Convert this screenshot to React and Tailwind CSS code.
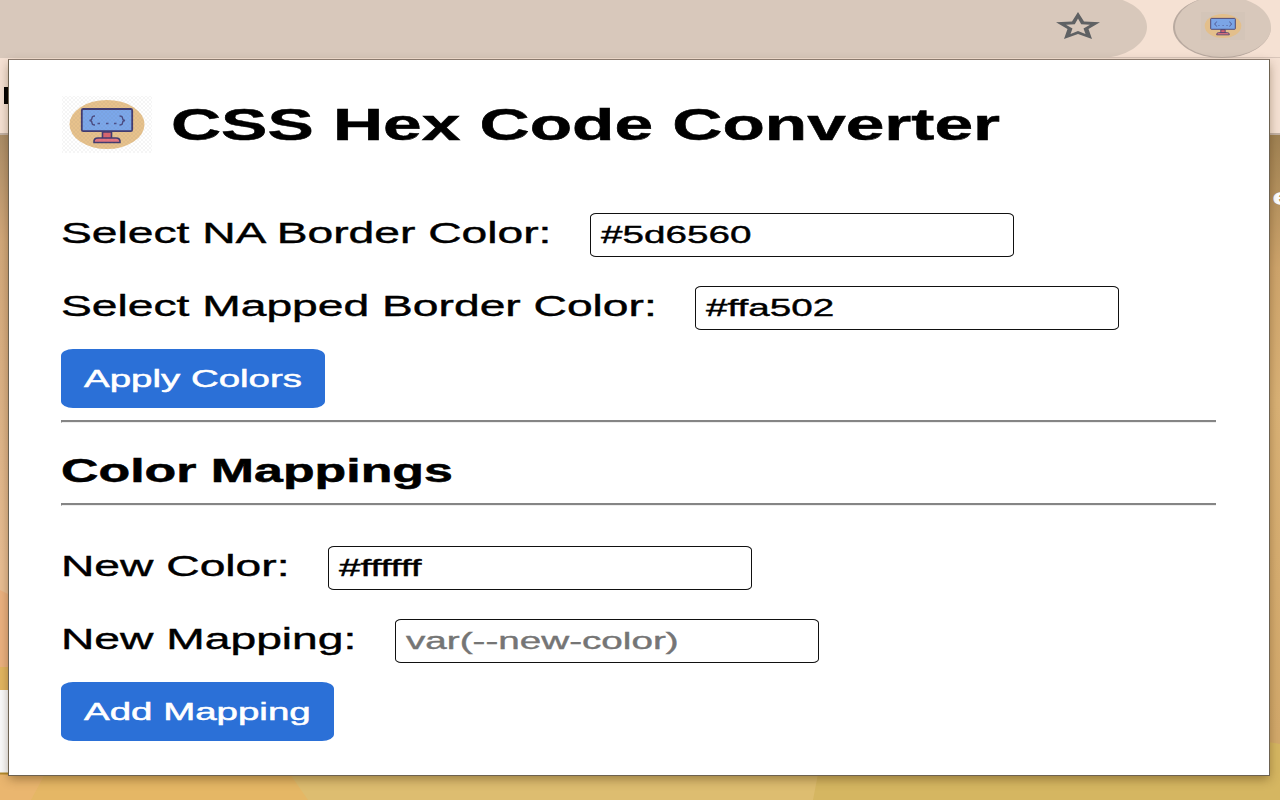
function Txt({ className = "", children }) {
  return (
    <span className={`inline-block origin-left scale-x-[1.577] whitespace-nowrap ${className}`}>
      {children}
    </span>
  );
}

function Monitor({ className }) {
  return (
    <svg viewBox="0 0 90 57" preserveAspectRatio="none" className={className} aria-hidden="true">
      <defs>
        <pattern id="hatch" width="4" height="4" patternUnits="userSpaceOnUse">
          <path d="M0 0L4 4M4 0L0 4" stroke="#777" strokeOpacity="0.12" strokeWidth="0.6" />
        </pattern>
      </defs>
      <ellipse cx="45" cy="28.5" rx="37.5" ry="24.5" fill="#e7c28c" />
      <path d="M40.5 36H49.5V43H40.5Z" fill="#d9646f" stroke="#413a70" strokeWidth="1.6" />
      <rect x="19.8" y="13" width="50.4" height="22.2" rx="1.5" fill="#7ba7ea" stroke="#413a70" strokeWidth="1.8" />
      <path d="M32 46.5Q31.5 42 36 42H54Q58.5 42 58 46.5Z" fill="#e5747f" stroke="#413a70" strokeWidth="1.6" />
      <path
        d="M33 20Q30 20 30 22Q30 24.3 27.5 24.5Q30 24.700 30 27Q30 29 33 29M57.500 20Q60.500 20 60.500 22Q60.500 24.300 63 24.500Q60.500 24.700 60.500 27Q60.500 29 57.500 29"
        fill="none"
        stroke="#413a70"
        strokeOpacity="0.85"
        strokeWidth="1.3"
      />
      <path d="M35.5 27.500H38M44 27.500H46.500M52 27.500H54.500" stroke="#413a70" strokeOpacity="0.8" strokeWidth="1.4" />
      <rect width="90" height="57" fill="url(#hatch)" />
    </svg>
  );
}

function Field({ label, labelWidth, value, placeholder }) {
  return (
    <div className="flex h-[44px] items-start">
      <label className={`${labelWidth} shrink-0 text-[29.3px] leading-[40px]`}>
        <Txt className="[-webkit-text-stroke:0.4px_#000]">{label}</Txt>
      </label>
      <div className="h-[44px] w-[424px] rounded-[6px/4px] border border-[#111] bg-white pl-[10px] text-[24.5px] leading-[41px]">
        <Txt className={placeholder ? "text-[#757575] [-webkit-text-stroke:0.4px_#757575]" : "text-black [-webkit-text-stroke:0.4px_#000]"}>
          {value}
        </Txt>
      </div>
    </div>
  );
}

function Button({ width, children }) {
  return (
    <button
      className={`${width} block h-[59px] rounded-[12px/7px] bg-[#2b70d7] pl-[23px] text-left text-[24.4px] leading-[57px] text-white`}
    >
      <Txt className="[-webkit-text-stroke:0.5px_#fff]">{children}</Txt>
    </button>
  );
}

function Rule() {
  return <div className="h-[3px] w-[1155px] border-t-2 border-l border-t-[#858585] border-l-[#858585] border-b border-b-[#eee]" />;
}

function Backdrop() {
  return (
    <svg viewBox="0 0 1280 665" preserveAspectRatio="none" className="h-[665px] w-full" aria-hidden="true">
      <defs>
        <linearGradient id="left" x2="0" y2="1">
          <stop offset="0" stopColor="#ab8d67" />
          <stop offset="0.16" stopColor="#d3a97b" />
          <stop offset="0.65" stopColor="#e8be93" />
          <stop offset="1" stopColor="#e8be93" />
        </linearGradient>
        <linearGradient id="right" x2="0" y2="1">
          <stop offset="0" stopColor="#a08253" />
          <stop offset="0.2" stopColor="#cfa56c" />
          <stop offset="0.4" stopColor="#dab276" />
          <stop offset="0.9" stopColor="#d3a96b" />
        </linearGradient>
      </defs>
      <rect width="640" height="665" fill="url(#left)" />
      <rect x="640" width="640" height="665" fill="url(#right)" />
      <path d="M0 455L8 459V535H0Z" fill="#ebb17f" />
      <path d="M0 532H8V556H0Z" fill="#e2b560" />
      <path d="M0 555H8V639H0Z" fill="#fafafa" />
      <path d="M0 638H1280V665H0Z" fill="#ddbd70" />
      <path d="M0 639H290L308 665H0Z" fill="#e5b765" />
      <path d="M0 639H45L31 665H0Z" fill="#eab66f" />
      <path d="M818 639L813 665H1280V609L1269 607V639Z" fill="#d5b661" />
      <path d="M0 638.5H8" stroke="#b28a2c" strokeWidth="2" />
    </svg>
  );
}

function Popup() {
  return (
    <main className="absolute left-[8px] top-[59px] h-[717px] w-[1262px] border border-[#6d6251] border-t-[#8b7a6d] bg-white pl-[52px] pt-[36px] text-black shadow-[0_4px_10px_-1px_rgba(60,35,0,0.42)]">
      <header className="flex h-[57px] items-start">
        <Monitor className="ml-px h-[57px] w-[90px]" />
        <h1 className="ml-[19px] text-[44px] font-bold leading-[57px]">
          <Txt className="[-webkit-text-stroke:0.5px_#000]">CSS Hex Code Converter</Txt>
        </h1>
      </header>
      <div className="mt-[60px] flex flex-col gap-[29px]">
        <Field label="Select NA Border Color:" labelWidth="w-[529px]" value="#5d6560" />
        <Field label="Select Mapped Border Color:" labelWidth="w-[634px]" value="#ffa502" />
      </div>
      <div className="mt-[19px]">
        <Button width="w-[264px]">Apply Colors</Button>
      </div>
      <div className="mt-[12px]">
        <Rule />
      </div>
      <h2 className="h-[80px] pt-[28px] text-[32.9px] font-bold leading-[40px]">
        <Txt className="[-webkit-text-stroke:0.5px_#000]">Color Mappings</Txt>
      </h2>
      <Rule />
      <div className="mt-[40px] flex flex-col gap-[29px]">
        <Field label="New Color:" labelWidth="w-[267px]" value="#ffffff" />
        <Field label="New Mapping:" labelWidth="w-[334px]" value="var(--new-color)" placeholder />
      </div>
      <div className="mt-[19px]">
        <Button width="w-[273px]">Add Mapping</Button>
      </div>
    </main>
  );
}

export default function App() {
  return (
    <div className="relative h-[800px] w-[1280px] overflow-hidden bg-[#f5e1d3] font-['Liberation_Sans',Arial,sans-serif]">
      <div className="flex h-[58px] items-start border-b border-[#d9c6ba]">
        <div className="-mt-[4px] flex h-[62px] w-[1147px] justify-end rounded-[0_48px_48px_0/0_31px_31px_0] bg-[#d8c8bb] pr-[46px] pt-[4px]">
          <svg viewBox="0 0 46 29" className="mt-[11px] h-[29px] w-[46px]" aria-hidden="true">
            <path
              fillRule="evenodd"
              d="M23 1L29 10.5L45 11.2L33.5 18L37 28L23 23L9 28L12.5 18L1 11.2L17 10.5ZM23 7.5L19.8 13.2L11 13.7L17.5 17.5L15.5 23L23 20L30.5 23L28.5 17.5L35 13.7L26.2 13.2Z"
              fill="#5f6163"
            />
          </svg>
        </div>
        <div className="-mt-[4px] ml-[26px] flex h-[62px] w-[98px] justify-center rounded-[50%] border-l-2 border-b border-[#b9aaa0] bg-[#d8c8bb] pt-[16px]">
          <Monitor className="h-[28px] w-[44px]" />
        </div>
      </div>
      <div className="h-[77px] border-b-2 border-[#c2b1a4] pt-[29px]">
        <div className="h-[17px] w-[12px] pl-[4px]">
          <div className="h-full bg-black" />
        </div>
      </div>
      <Backdrop />
      <span className="absolute left-[1272px] top-[184px] origin-left scale-x-[1.58] text-[24px] font-bold leading-[26px] text-white">e</span>
      <Popup />
    </div>
  );
}
